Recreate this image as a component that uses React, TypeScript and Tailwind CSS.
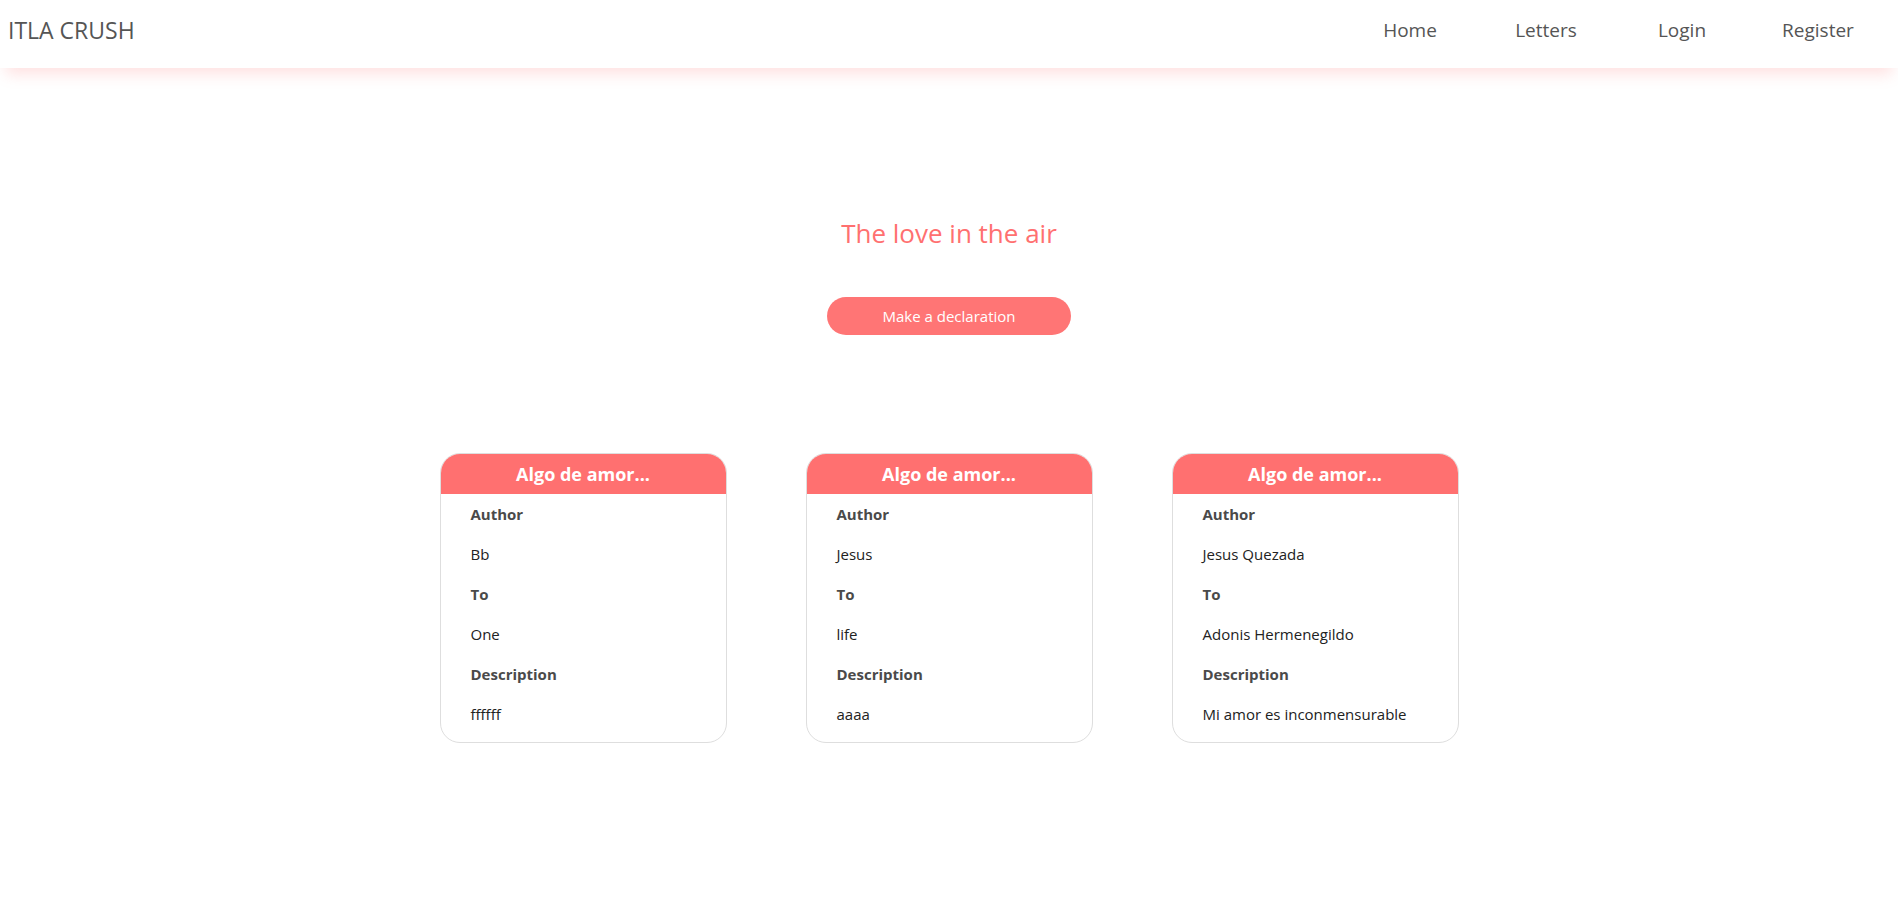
import React from "react"

const letters = [
  { author: "Bb", to: "One", description: "ffffff" },
  { author: "Jesus", to: "life", description: "aaaa" },
  { author: "Jesus Quezada", to: "Adonis Hermenegildo", description: "Mi amor es inconmensurable" },
]

const navLinks = ["Home", "Letters", "Login", "Register"]

function LetterCard({ author, to, description }: { author: string; to: string; description: string }) {
  return (
    <div className="w-[287px] rounded-[20px] border border-[#dedede] bg-white overflow-hidden pb-2">
      <div className="h-10 bg-[#ff7070] flex items-center justify-center text-white text-[18px] font-bold">
        Algo de amor...
      </div>
      <div className="px-[30px] text-[15px] leading-[40px]">
        <p className="font-bold text-[#4a4a4a]">Author</p>
        <p className="text-[#222]">{author}</p>
        <p className="font-bold text-[#4a4a4a]">To</p>
        <p className="text-[#222]">{to}</p>
        <p className="font-bold text-[#4a4a4a]">Description</p>
        <p className="text-[#222]">{description}</p>
      </div>
    </div>
  )
}

export default function App() {
  return (
    <div className="min-h-screen bg-white font-['Segoe_UI','Open_Sans',sans-serif]">
      {/* Navbar */}
      <header className="relative h-[68px] bg-white flex items-center justify-between pl-2 pr-3 pb-[7px] shadow-[0_12px_14px_-6px_rgba(255,120,120,0.22)]">
        <span className="text-[23px] text-[#555]">ITLA CRUSH</span>
        <nav className="flex">
          {navLinks.map((link) => (
            <a key={link} href="#" className="w-[136px] text-center text-[19px] text-[#555]">
              {link}
            </a>
          ))}
        </nav>
      </header>

      <main className="flex flex-col items-center">
        <h1 className="mt-[147px] text-[26px] text-[#ff7070] leading-[36px]">The love in the air</h1>
        <button className="mt-[46px] w-[244px] h-[38px] rounded-full bg-[#ff7575] text-white text-[15px]">
          Make a declaration
        </button>

        <div className="mt-[118px] flex gap-[79px]">
          {letters.map((l, i) => (
            <LetterCard key={i} {...l} />
          ))}
        </div>
      </main>
    </div>
  )
}
